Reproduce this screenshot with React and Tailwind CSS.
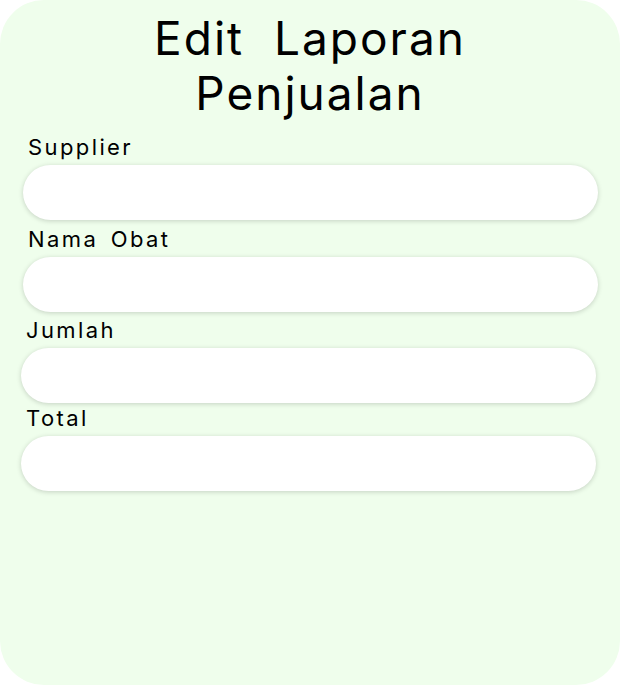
import React from 'react';

const fields = [
  { label: 'Supplier', wrap: 'pl-[23px] pr-[22px]', lab: 'pl-[5px]', top: 'mt-[12px]' },
  { label: 'Nama Obat', wrap: 'pl-[23px] pr-[22px]', lab: 'pl-[5px]', top: 'mt-[5px]' },
  { label: 'Jumlah', wrap: 'pl-[21px] pr-[24px]', lab: 'pl-[5px]', top: 'mt-[4px]' },
  { label: 'Total', wrap: 'pl-[21px] pr-[24px]', lab: 'pl-[5px]', top: 'mt-[1px]' },
];

const App = () => {
  return (
    <div
      className="w-[620px] h-[685px] bg-white"
      style={{ fontFamily: 'Inter, "Noto Sans", sans-serif' }}
    >
      <div className="w-full h-full bg-[#effeec] rounded-[44px] pt-[11px]">
        <h1 className="text-center text-[46px] leading-[55px] font-normal tracking-[2px] text-black">
          Edit&nbsp; Laporan
          <br />
          Penjualan
        </h1>

        {/* Form */}
        {fields.map((f) => (
          <div key={f.label} className={`${f.wrap} ${f.top}`}>
            <label className={`block ${f.lab} text-[22px] leading-[28px] tracking-[2.4px] [word-spacing:4px] text-black mb-[4px]`}>
              {f.label}
            </label>
            <input
              type="text"
              className="block w-full h-[55px] rounded-full bg-white outline-none shadow-[0_1px_5px_rgba(0,0,0,0.18)] px-5"
            />
          </div>
        ))}
      </div>
    </div>
  );
};

export default App;
